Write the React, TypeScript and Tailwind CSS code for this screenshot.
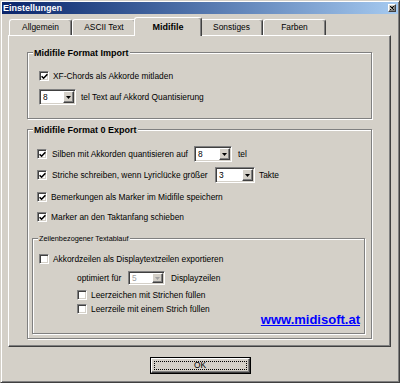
import type { ReactNode } from "react";

const sunken =
  "border border-t-[#808080] border-l-[#808080] border-r-white border-b-white shadow-[inset_1px_1px_0_#404040,inset_-1px_-1px_0_#d4d0c8]";
const raised =
  "border border-t-white border-l-white border-r-[#404040] border-b-[#404040] shadow-[inset_-1px_-1px_0_#808080]";

function Check({ checked }: { checked?: boolean }) {
  return (
    <span className={`flex h-[10px] w-[10px] shrink-0 items-center justify-center bg-white ${sunken}`}>
      {checked && (
        <svg width="7" height="7" viewBox="0 0 7 7">
          <path d="M0.6 3.2 L2.6 5.2 L6.4 1.2" fill="none" stroke="#000" strokeWidth="1.6" />
        </svg>
      )}
    </span>
  );
}

function Combo({ value, className, disabled }: { value: string; className: string; disabled?: boolean }) {
  return (
    <div className={`flex shrink-0 bg-white p-[1px] ${sunken} ${className}`}>
      <span className={`flex flex-1 items-center pl-[2px] ${disabled ? "text-[#a0a0a0]" : "text-black"}`}>{value}</span>
      <span className={`flex w-[11px] items-center justify-center bg-[#d4d0c8] ${raised}`}>
        <svg width="5" height="3" viewBox="0 0 5 3">
          <path d="M0 0h5L2.5 3z" fill={disabled ? "#a0a0a0" : "#000"} />
        </svg>
      </span>
    </div>
  );
}

function Group({ title, small, className, children }: { title: string; small?: boolean; className: string; children: ReactNode }) {
  return (
    <div className={`relative flex flex-col border border-[#808080] shadow-[inset_1px_1px_0_#fff,1px_1px_0_#fff] ${className}`}>
      <span
        className={`absolute left-[5px] bg-[#d4d0c8] px-[1px] ${
          small ? "top-[-5px] text-[7.3px] leading-[9px]" : "top-[-5px] text-[9px] font-bold leading-[11px]"
        }`}
      >
        {title}
      </span>
      {children}
    </div>
  );
}

function Row({ checked, label, className }: { checked?: boolean; label: string; className: string }) {
  return (
    <div className={`flex h-[12px] items-center ${className}`}>
      <Check checked={checked} />
      <span className="ml-[4px] whitespace-nowrap">{label}</span>
    </div>
  );
}

function Tab({ label, className, active }: { label: string; className: string; active?: boolean }) {
  if (active) {
    return (
      <div
        className={`relative z-10 -mx-[2px] mb-[-1px] flex h-[19px] justify-center rounded-t-[3px] border-t border-l border-r border-t-white border-l-white border-r-[#404040] bg-[#d4d0c8] pt-[4px] text-[9px] font-bold leading-[11px] shadow-[inset_-1px_0_0_#808080] ${className}`}
      >
        {label}
      </div>
    );
  }
  return (
    <div
      className={`flex h-[16px] items-center justify-center rounded-t-[3px] border-t border-l border-r border-t-white border-l-white border-r-[#404040] shadow-[inset_-1px_0_0_#808080] ${className}`}
    >
      {label}
    </div>
  );
}

export default function App() {
  return (
    <div className="h-[383px] w-[400px] overflow-hidden bg-[#d4d0c8] font-['Liberation_Sans',Arial,sans-serif] text-[8.4px] text-black">
      <div className="flex h-full flex-col border border-t-[#d4d0c8] border-l-[#d4d0c8] border-r-[#404040] border-b-[#404040] p-[1px] shadow-[inset_1px_1px_0_#fff,inset_-1px_-1px_0_#808080]">
        {/* title bar */}
        <div className="flex h-[12px] items-center justify-between bg-linear-to-r from-[#0a246a] to-[#a6caf0] pl-[1px] pr-[2px]">
          <span className="text-[9px] font-bold leading-[12px] text-white">Einstellungen</span>
          <span className={`flex h-[8px] w-[8px] items-center justify-center bg-[#d4d0c8] ${raised}`}>
            <svg width="4" height="4" viewBox="0 0 4 4">
              <path d="M0 0L4 4M4 0L0 4" stroke="#000" strokeWidth="1.1" />
            </svg>
          </span>
        </div>

        {/* tabs */}
        <div className="mt-[3px] flex h-[18px] items-end pl-[7px]">
          <Tab label="Allgemein" className="w-[63px]" />
          <Tab label="ASCII Text" className="w-[64px]" />
          <Tab label="Midifile" className="w-[68px]" active />
          <Tab label="Sonstiges" className="w-[63px]" />
          <Tab label="Farben" className="w-[63px]" />
        </div>

        {/* tab panel */}
        <div className="ml-[6px] flex h-[312px] w-[383px] flex-col border border-t-white border-l-white border-r-[#404040] border-b-[#404040] pt-[16px] shadow-[inset_-1px_-1px_0_#808080]">
          <Group title="Midifile Format Import" className="ml-[18px] h-[67px] w-[345px] pl-[11px] pt-[17px]">
            <Row checked label="XF-Chords als Akkorde mitladen" className="" />
            <div className="mt-[7px] flex h-[16px] items-center">
              <Combo value="8" className="h-[16px] w-[37px]" />
              <span className="ml-[5px] whitespace-nowrap">tel Text auf Akkord Quantisierung</span>
            </div>
          </Group>

          <Group title="Midifile Format 0 Export" className="ml-[18px] mt-[10px] h-[210px] w-[345px] pt-[16px]">
            <div className="flex h-[16px] items-center pl-[9px]">
              <Check checked />
              <span className="ml-[5px] w-[142px] whitespace-nowrap">Silben mit Akkorden quantisieren auf</span>
              <Combo value="8" className="h-[16px] w-[38px]" />
              <span className="ml-[6px]">tel</span>
            </div>
            <div className="mt-[5px] flex h-[16px] items-center pl-[9px]">
              <Check checked />
              <span className="ml-[5px] w-[163px] whitespace-nowrap">Striche schreiben, wenn Lyriclücke größer</span>
              <Combo value="3" className="h-[16px] w-[40px]" />
              <span className="ml-[4px]">Takte</span>
            </div>
            <Row checked label="Bemerkungen als Marker im Midifile speichern" className="mt-[8px] pl-[9px]" />
            <Row checked label="Marker an den Taktanfang schieben" className="mt-[8px] pl-[9px]" />

            <Group title="Zeilenbezogener Textablauf" small className="ml-[4px] mt-[15px] h-[96px] w-[333px] pt-[14px]">
              <Row label="Akkordzeilen als Displaytextzeilen exportieren" className="pl-[6px]" />
              <div className="mt-[6px] flex h-[14px] items-center pl-[44px]">
                <span className="w-[51px] whitespace-nowrap">optimiert für</span>
                <Combo value="5" disabled className="h-[14px] w-[37px]" />
                <span className="ml-[6px]">Displayzeilen</span>
              </div>
              <Row label="Leerzeichen mit Strichen füllen" className="mt-[4px] pl-[44px]" />
              <Row label="Leerzeile mit einem Strich füllen" className="mt-[2px] pl-[44px]" />
              <div className="-mt-[2px] flex justify-end pr-[4px]">
                <span className="text-[13px] font-bold leading-[13px] text-[#0000ff] underline">www.midisoft.at</span>
              </div>
            </Group>
          </Group>
        </div>

        {/* OK button */}
        <div className="mt-[10px] flex justify-center">
          <div className="h-[17px] w-[101px] border border-black">
            <div className={`flex h-full w-full items-center justify-center bg-[#d4d0c8] p-[2px] ${raised}`}>
              <div className="flex h-full w-full items-center justify-center border border-dotted border-black">OK</div>
            </div>
          </div>
        </div>
      </div>
    </div>
  );
}
